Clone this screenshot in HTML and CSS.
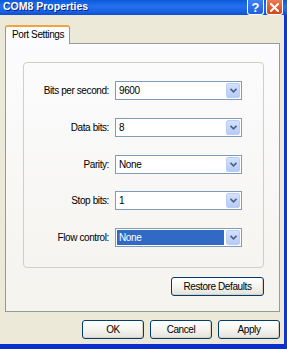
FILE: index.html
```html
<!DOCTYPE html>
<html>
<head>
<meta charset="utf-8">
<link rel="stylesheet" href="styles.css">
</head>
<body>
<div class="window">
  <div class="titlebar">
    <span class="title">COM8 Properties</span>
    <div class="tb-buttons">
      <span class="tb-btn help">?</span>
      <span class="tb-btn close"><svg width="9" height="9" viewBox="0 0 9 9"><path d="M1 1 L8 8 M8 1 L1 8" stroke="#fff" stroke-width="2" stroke-linecap="square"/></svg></span>
    </div>
  </div>
  <div class="client">
    <div class="tabs"><div class="tab">Port Settings</div></div>
    <div class="panel">
      <div class="group">
        <div class="row"><span class="label">Bits per second:</span><div class="combo"><span class="value">9600</span><span class="drop"><svg width="7" height="5" viewBox="0 0 7 5"><path d="M0.5 0.8 L3.5 3.8 L6.5 0.8" fill="none" stroke="#4d6185" stroke-width="1.6"/></svg></span></div></div>
        <div class="row"><span class="label">Data bits:</span><div class="combo"><span class="value">8</span><span class="drop"><svg width="7" height="5" viewBox="0 0 7 5"><path d="M0.5 0.8 L3.5 3.8 L6.5 0.8" fill="none" stroke="#4d6185" stroke-width="1.6"/></svg></span></div></div>
        <div class="row"><span class="label">Parity:</span><div class="combo"><span class="value">None</span><span class="drop"><svg width="7" height="5" viewBox="0 0 7 5"><path d="M0.5 0.8 L3.5 3.8 L6.5 0.8" fill="none" stroke="#4d6185" stroke-width="1.6"/></svg></span></div></div>
        <div class="row"><span class="label">Stop bits:</span><div class="combo"><span class="value">1</span><span class="drop"><svg width="7" height="5" viewBox="0 0 7 5"><path d="M0.5 0.8 L3.5 3.8 L6.5 0.8" fill="none" stroke="#4d6185" stroke-width="1.6"/></svg></span></div></div>
        <div class="row"><span class="label">Flow control:</span><div class="combo"><span class="value selected">None</span><span class="drop"><svg width="7" height="5" viewBox="0 0 7 5"><path d="M0.5 0.8 L3.5 3.8 L6.5 0.8" fill="none" stroke="#4d6185" stroke-width="1.6"/></svg></span></div></div>
      </div>
      <div class="panel-actions"><button class="btn restore">Restore Defaults</button></div>
    </div>
    <div class="actions">
      <button class="btn">OK</button>
      <button class="btn">Cancel</button>
      <button class="btn">Apply</button>
    </div>
  </div>
</div>
</body>
</html>
```

FILE: styles.css
```css
* { box-sizing: border-box; }
html, body { margin: 0; padding: 0; }
body {
  width: 287px;
  height: 349px;
  overflow: hidden;
  background: #ece9d8;
  font-family: "Liberation Sans", Arial, sans-serif;
  font-size: 10px;
  letter-spacing: -0.4px;
  color: #000;
}
.window {
  width: 287px;
  height: 349px;
  display: flex;
  flex-direction: column;
}
.titlebar {
  height: 15px;
  flex: none;
  display: flex;
  align-items: flex-start;
  justify-content: space-between;
  background: linear-gradient(#0a5ad8 0%, #2470ee 40%, #1b62e4 75%, #0c4fcf 100%);
  padding-left: 3px;
}
.title {
  font-weight: bold;
  font-size: 10.5px;
  letter-spacing: 0;
  color: #fff;
  line-height: 13px;
  text-shadow: 1px 1px 0 #0a1f8a;
}
.tb-buttons {
  display: flex;
  gap: 2px;
  padding-right: 4px;
}
.tb-btn {
  width: 17px;
  height: 15px;
  border: 1px solid #fff;
  border-top: none;
  border-radius: 0 0 3px 3px;
  display: flex;
  align-items: center;
  justify-content: center;
  color: #fff;
  font-weight: bold;
  font-size: 13px;
  letter-spacing: 0;
  line-height: 1;
}
.help { background: linear-gradient(#3d82f6, #1f5fe0); }
.close { background: linear-gradient(#ea7a52, #d5451c); }
.client {
  flex: 1;
  display: flex;
  flex-direction: column;
  padding: 10px 4px 0 5px;
  border-right: 3px solid #0b37d6;
  border-bottom: 5px solid #0a2fcf;
}
.tabs {
  display: flex;
  height: 18px;
  position: relative;
  z-index: 1;
}
.tab {
  width: 65px;
  height: 19px;
  background: #fcfcfe;
  border: 1px solid #919b9c;
  border-bottom: none;
  border-top: 2px solid #f0a43c;
  border-radius: 3px 3px 0 0;
  padding-left: 6px;
  line-height: 16px;
  white-space: nowrap;
}
.panel {
  height: 269px;
  border: 1px solid #919b9c;
  background: linear-gradient(#fcfcfe, #f4f3ee);
  padding: 18px 0 0 17px;
}
.group {
  width: 241px;
  height: 206px;
  border: 1px solid #d0d0bf;
  border-radius: 4px;
  padding: 18px 0 0 0;
  display: flex;
  flex-direction: column;
  gap: 17.75px;
}
.row {
  display: flex;
  align-items: center;
  height: 19px;
}
.label {
  width: 85px;
  text-align: right;
  margin-right: 6px;
  white-space: nowrap;
}
.combo {
  width: 127px;
  height: 19px;
  border: 1px solid #7f9db9;
  background: #fff;
  display: flex;
  align-items: stretch;
  padding: 1px;
}
.value {
  flex: 1;
  padding-left: 2px;
  line-height: 15px;
  margin-right: 2px;
}
.value.selected {
  background: #316ac5;
  color: #fff;
}
.drop {
  width: 14px;
  border: 1px solid #b9cdf7;
  border-radius: 2px;
  background: linear-gradient(#d4e1fc, #b6cbf8);
  display: flex;
  align-items: center;
  justify-content: center;
}
.panel-actions {
  width: 241px;
  display: flex;
  justify-content: flex-end;
  margin-top: 9px;
}
.btn {
  font-family: inherit;
  font-size: 10px;
  letter-spacing: -0.4px;
  color: #000;
  height: 19px;
  width: 62px;
  padding: 0;
  border: 1px solid #003c74;
  border-radius: 3px;
  background: linear-gradient(#ffffff 0%, #f4f4f0 50%, #e3e2da 100%);
  box-shadow: inset -1px -1px 0 #d6d0c5;
}
.btn.restore { width: 93px; }
.actions {
  display: flex;
  justify-content: flex-end;
  gap: 6px;
  margin-top: 8px;
}
```
